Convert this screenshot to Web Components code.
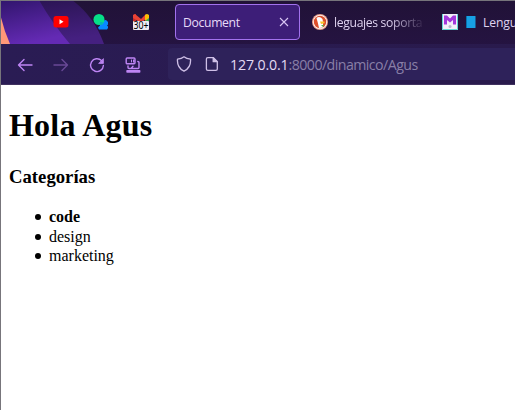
<!DOCTYPE html>
<html lang="es">
<head>
<meta charset="utf-8">
<title>Document</title>
<style>
html,body{margin:0;height:100%;overflow:hidden;background:#fff}
</style>
</head>
<body>
<browser-window></browser-window>

<template id="t-window">
<style>
:host{display:flex;flex-direction:column;box-sizing:border-box;width:515px;height:410px;border-left:1px solid #77757b;border-top:1px solid #77757b;background:#fff;overflow:hidden}
.chrome{display:flex;flex-direction:column;height:84px;flex:none;position:relative;background:#25143f}
.art{position:absolute;left:0;top:0}
tab-strip,nav-bar{position:relative}
</style>
<div class="chrome">
<svg class="art" width="514" height="84" viewBox="1 1 514 84">
<defs>
<linearGradient id="a" x1="0" y1="0" x2=".35" y2="1"><stop offset="0" stop-color="#30156c"/><stop offset="1" stop-color="#642ab4"/></linearGradient>
<linearGradient id="b" x1="0" y1="0" x2=".3" y2="1"><stop offset="0" stop-color="#28134f"/><stop offset="1" stop-color="#452080"/></linearGradient>
<linearGradient id="c" x1="0" y1="0" x2="0" y2="1"><stop offset="0" stop-color="#211237"/><stop offset="1" stop-color="#28154a"/></linearGradient>
</defs>
<rect width="515" height="85" fill="url(#c)"/>
<path d="M0 0H72Q94 16 104 44H0Z" fill="url(#b)"/>
<path d="M0 0H39Q52 23 70 44H0Z" fill="url(#a)"/>
<path d="M0 13Q3 28 10 44H0Z" fill="#ff9878"/>
</svg>
<tab-strip></tab-strip>
<nav-bar></nav-bar>
</div>
<category-page name="Agus">
<category-item strong>code</category-item>
<category-item>design</category-item>
<category-item>marketing</category-item>
</category-page>
</template>

<template id="t-strip">
<style>
:host{display:flex;box-sizing:border-box;height:43px;padding-bottom:1px;align-items:center;flex:none}
.pins{display:flex;gap:24px;padding-left:52px;width:122px;flex:none}
svg{display:block;flex:none}
.tabs{display:flex;align-items:center;flex:none}
</style>
<div class="pins">
<svg width="16" height="16" viewBox="0 0 16 16"><rect x=".5" y="2" width="15" height="11.500" rx="2.5" fill="#f00"/><path d="M6.5 5.300v5l4-2.500z" fill="#fff"/></svg>
<svg width="16" height="16" viewBox="0 0 16 16"><path d="M7 7l6-1 2 2v2.500l-1 1 1 1v1.500l-1 1.500H6l-1-2 2-2z" fill="#078aff"/><circle cx="6" cy="5.500" r="5.500" fill="#06df88"/><path d="M7 8l3 0-1 3H7z" fill="#05b5b4"/></svg>
<svg width="16" height="16" viewBox="0 0 16 16" overflow="visible"><path d="M0 8V1l3-1v8z" fill="#c52828"/><path d="M13 8V0l3 1v7z" fill="#36a852"/><path d="M0 1l2-1 6 5v4L0 4z" fill="#ea4335"/><path d="M8 5l5-5 1 4-6 5z" fill="#ea4335"/><path d="M12 1l2-1 2 1v3l-4 3z" fill="#fbbc04"/><rect y="7" width="16" height="9" rx="1" fill="#eeeaf2"/><text x=".5" y="15" font-family="Noto Sans,sans-serif" font-size="10" textLength="15" lengthAdjust="spacingAndGlyphs" fill="#000">30+</text></svg>
</div>
<div class="tabs">
<browser-tab active style="--w:125px">Document</browser-tab>
<browser-tab style="--w:122px;margin-left:4px;margin-right:8px">
<svg slot="icon" width="16" height="16" viewBox="0 0 16 16"><circle cx="8" cy="8" r="8" fill="#e9a18e"/><circle cx="8" cy="8" r="7" fill="#fff"/><circle cx="8" cy="8" r="6.2" fill="#dd4f2b"/><path d="M4.500 4q3-2.500 6 1l.5 3v5.500l-4 .5Q6 9 4.500 4z" fill="#fff"/><path d="M8 7.500h4.500v1.800L9 10z" fill="#fdc52d"/><path d="M9 11h3l-1 2z" fill="#54b84b"/></svg>leguajes soporta</browser-tab>
<browser-tab plain style="--w:80px">
<svg slot="icon" width="16" height="16" viewBox="0 0 16 16"><rect width="16" height="16" rx="1" fill="#f3eefa"/><path d="M.5 0v15.500h15V0" fill="none" stroke="#63d7d2"/><path d="M2 10.5V1.500h3l3 3 3-3h3v9h-3V6L8 8.5 5 6v4.500z" fill="#a338dc"/><circle cx="8" cy="12.500" r="1.500" fill="#b9b6cb"/></svg>
<svg slot="icon" width="10" height="12" viewBox="0 0 10 12"><rect width="9.500" height="12" rx=".5" fill="#17a0e4"/><path d="M.5 0v12" stroke="#0873ad"/></svg>Lengu</browser-tab>
</div>
</template>

<template id="t-tab">
<style>
:host{display:flex;box-sizing:border-box;width:var(--w);height:36px;align-items:center;padding:0 8px;gap:7px;color:#dfd3f0;font:12.2px/18px "Open Sans","Noto Sans",sans-serif;letter-spacing:-.34px;white-space:nowrap;flex:none}
:host([active]){background:#3d1e78;border:1px solid #a372ee;border-radius:4px;padding:0 7px;color:#e8dcf8}
:host(:not([active])){padding-right:0;gap:6px}
:host([plain]){gap:7.5px;letter-spacing:-.15px}
.label{flex:1;min-width:0;padding-top:2px}
:host(:not([active]):not([plain])) .label{-webkit-mask-image:linear-gradient(90deg,#000 55px,transparent 92px);mask-image:linear-gradient(90deg,#000 55px,transparent 92px)}
.x{display:none}
:host([active]) .x{display:block;flex:none;margin-right:3px}
</style>
<slot name="icon"></slot><span class="label"><slot></slot></span>
<svg class="x" width="10" height="10" viewBox="0 0 10 10"><path d="M1 1l8 8M9 1l-8 8" stroke="#d8c6f3" stroke-width="1.100"/></svg>
</template>

<template id="t-nav">
<style>
:host{display:flex;box-sizing:border-box;height:41px;align-items:center;flex:none;background:linear-gradient(90deg,#2a1c54,#291a4c);border-bottom:1px solid #40315f}
.buttons{display:flex;gap:20px;padding:1px 0 0 16px;width:151px;flex:none}
svg{display:block;fill:none;stroke:#be85f4;stroke-width:1.400;stroke-linecap:round;stroke-linejoin:round;flex:none}
.off{opacity:.42}
.url{display:flex;align-items:center;height:32px;flex:1;border-radius:4px 0 0 4px;background:#2e225a;padding-left:8px;gap:12px}
.url svg{stroke:#cfc0e7;stroke-width:1.300}
.addr{font:14.2px/20px "Open Sans","Noto Sans",sans-serif;color:#897fa7;letter-spacing:-.55px;white-space:nowrap;margin:2px 0 0 -2px}
.addr b{font-weight:400;color:#e4daf3;letter-spacing:-.15px}
</style>
<div class="buttons">
<svg width="16" height="16" viewBox="0 0 16 16"><path d="M15 8H1.500M7 2.500L1.500 8 7 13.500"/></svg>
<svg class="off" width="16" height="16" viewBox="0 0 16 16"><path d="M1 8h13.500M9 2.500L14.500 8 9 13.500"/></svg>
<svg width="16" height="16" viewBox="0 0 16 16"><path d="M12.500 3.600A6.400 6.400 0 1 0 14.400 8.500"/><path d="M14.400 2v4.400H10z" fill="#be85f4" stroke-width=".8"/></svg>
<svg width="16" height="16" viewBox="0 0 16 16"><rect x="1.200" y="1" width="8.800" height="5.800" rx="1"/><path d="M6.500 3v2" stroke-width="1"/><path d="M8 2.500h1.500v3H8z" fill="#be85f4" stroke="none"/><path d="M3 9v1.500q0 1 1 1h9q1 0 1-1V5.500q0-1-1.200-1M6.500 11L8 9.300"/><path d="M2 13.800h12.700v1.200H2z" fill="#be85f4"/></svg>
</div>
<div class="url">
<svg width="16" height="16" viewBox="0 0 16 16"><path d="M8 .8C6 2.400 3.700 2.900 1.500 3.100 1 9 3.500 13 8 15.200 12.500 13 15 9 14.500 3.100 12.300 2.900 10 2.400 8 .8z"/></svg>
<svg width="16" height="16" viewBox="0 0 16 16"><path d="M3.800 1.600h5.500l4 4v7.400q0 1.400-1.400 1.400H3.800q-1.400 0-1.400-1.400V3q0-1.400 1.400-1.400z"/><path d="M9.200 1.800v3.900h4z" fill="#cfc0e7"/></svg>
<span class="addr"><b>127.0.0.1</b>:8000/dinamico/Agus</span>
</div>
</template>

<template id="t-page">
<style>
:host{display:block;flex:1;padding:0 8px;font:16px/19.600px "Liberation Serif","Times New Roman",serif;color:#000;background:#fff}
h1{font-size:32px;line-height:38px;margin:21px 0 0;letter-spacing:.22px}
h3{font-size:18.720px;line-height:22px;margin:22px 0 0}
ul{margin:19px 0 0;padding-left:26px;list-style:none}
</style>
<h1>Hola <span></span></h1>
<h3>Categorías</h3>
<ul><slot></slot></ul>
</template>

<template id="t-item">
<style>:host{display:flex;align-items:center;gap:8px}:host([strong]){font-weight:700}:host::before{content:"";width:6px;height:6px;margin-top:1px;border-radius:50%;background:#000}</style><span><slot></slot></span>
</template>

<script>
const define = (name, id, setup) => customElements.define(name, class extends HTMLElement {
  constructor() {
    super();
    this.attachShadow({mode: "open"}).append(document.getElementById(id).content.cloneNode(true));
  }
  connectedCallback() { if (setup) setup(this); }
});
define("browser-tab", "t-tab");
define("tab-strip", "t-strip");
define("nav-bar", "t-nav");
define("category-item", "t-item");
define("category-page", "t-page", el => { el.shadowRoot.querySelector("h1 span").textContent = el.getAttribute("name"); });
define("browser-window", "t-window");
</script>
</body>
</html>
